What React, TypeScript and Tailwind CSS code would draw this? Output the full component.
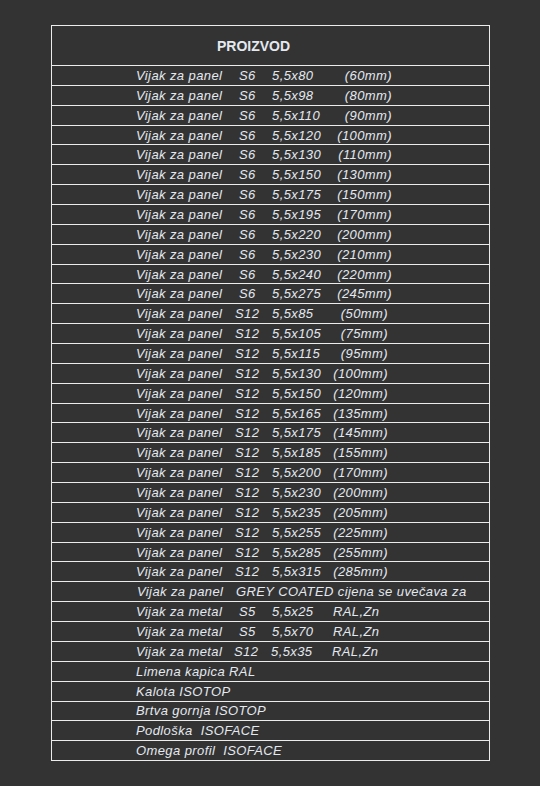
type PanelRow = { code: "S6" | "S12"; dim: string; tail: string };

const s6: [string, string][] = [
  ["5,5x80", "(60mm)"],
  ["5,5x98", "(80mm)"],
  ["5,5x110", "(90mm)"],
  ["5,5x120", "(100mm)"],
  ["5,5x130", "(110mm)"],
  ["5,5x150", "(130mm)"],
  ["5,5x175", "(150mm)"],
  ["5,5x195", "(170mm)"],
  ["5,5x220", "(200mm)"],
  ["5,5x230", "(210mm)"],
  ["5,5x240", "(220mm)"],
  ["5,5x275", "(245mm)"],
];

const s12: [string, string][] = [
  ["5,5x85", "(50mm)"],
  ["5,5x105", "(75mm)"],
  ["5,5x115", "(95mm)"],
  ["5,5x130", "(100mm)"],
  ["5,5x150", "(120mm)"],
  ["5,5x165", "(135mm)"],
  ["5,5x175", "(145mm)"],
  ["5,5x185", "(155mm)"],
  ["5,5x200", "(170mm)"],
  ["5,5x230", "(200mm)"],
  ["5,5x235", "(205mm)"],
  ["5,5x255", "(225mm)"],
  ["5,5x285", "(255mm)"],
  ["5,5x315", "(285mm)"],
];

const panels: PanelRow[] = [
  ...s6.map(([dim, tail]) => ({ code: "S6" as const, dim, tail })),
  ...s12.map(([dim, tail]) => ({ code: "S12" as const, dim, tail })),
];

const metal = [
  { code: "S5", dim: "5,5x25" },
  { code: "S5", dim: "5,5x70" },
  { code: "S12", dim: "5,5x35" },
];

const extras = ["Limena kapica RAL", "Kalota ISOTOP", "Brtva gornja ISOTOP", "Podloška  ISOFACE", "Omega profil  ISOFACE"];

const Row = ({ children }: { children: React.ReactNode }) => (
  <div className="h-[19.86px] border-t border-[#ececec] flex items-center pl-[84px] whitespace-pre">
    {children}
  </div>
);

export default function App() {
  return (
    <div
      className="min-h-screen bg-[#333333] pt-[25px] pb-[25px] pl-[51px] pr-[50px] text-[#e4e9f0] italic text-[13px] tracking-[0.4px] leading-none"
      style={{ fontFamily: '"Liberation Sans", Arial, sans-serif' }}
    >
      <div className="border border-[#ececec]">
        <div className="h-[39px] flex items-center justify-center pr-[34px] not-italic font-bold text-[14px] tracking-normal">
          PROIZVOD
        </div>

        {panels.map((r, i) => (
          <Row key={"p" + i}>
            <span className={r.code === "S6" ? "w-[103px] shrink-0" : "w-[99px] shrink-0"}>Vijak za panel</span>
            <span className={r.code === "S6" ? "w-[33px] shrink-0" : "w-[37px] shrink-0"}>{r.code}</span>
            <span className={r.code === "S6" ? "w-[120px] shrink-0 flex justify-between" : "w-[116px] shrink-0 flex justify-between"}>
              <span>{r.dim}</span>
              <span>{r.tail}</span>
            </span>
          </Row>
        ))}

        <Row>
          <span className="w-[100px] shrink-0 pl-[1px]">Vijak za panel</span>
          <span>GREY COATED cijena se uvečava za</span>
        </Row>

        {metal.map((m, i) => (
          <Row key={"m" + i}>
            <span className={m.code === "S5" ? "w-[103px] shrink-0" : "w-[98px] shrink-0"}>Vijak za metal</span>
            <span className={m.code === "S5" ? "w-[33px] shrink-0" : "w-[37px] shrink-0"}>{m.code}</span>
            <span className="w-[61px] shrink-0">{m.dim}</span>
            <span>RAL,Zn</span>
          </Row>
        ))}

        {extras.map((t) => (
          <Row key={t}>
            <span>{t}</span>
          </Row>
        ))}
      </div>
    </div>
  );
}
